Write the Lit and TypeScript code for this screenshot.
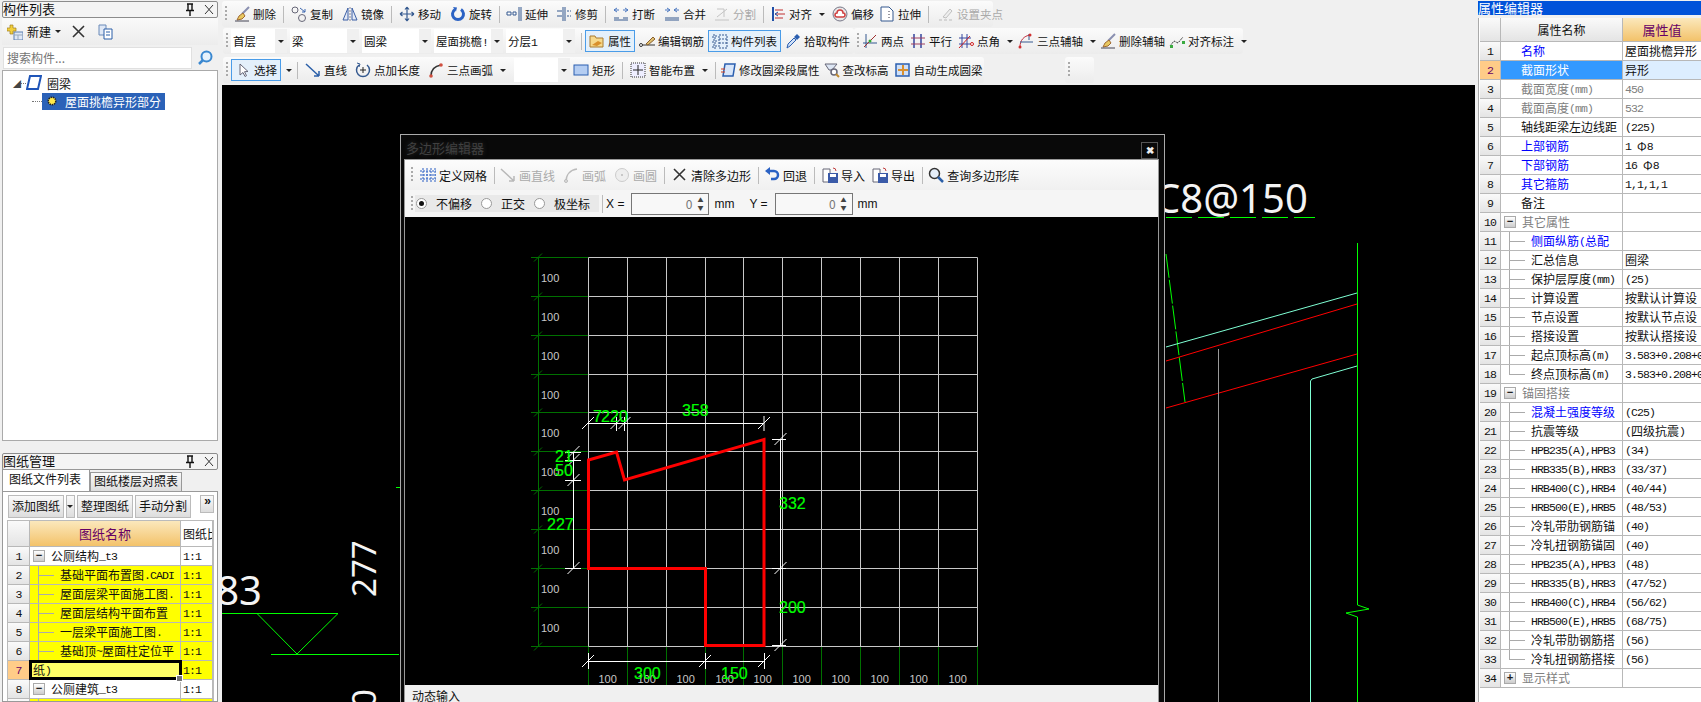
import { css, html, LitElement, svg } from "lit";
import { customElement } from "lit/decorators.js";

type Tool = { i?: string; t?: string; caret?: boolean; on?: boolean; off?: boolean; sep?: boolean; combo?: string; w?: number; ml?: number };

const icons: Record<string, unknown> = {
  erase: svg`<path d="M15 1 8 8" stroke="#8a8fb0" stroke-width="2"/><path d="M9 7 5 10l-2 4 5-1 3-3z" fill="#e8c860" stroke="#a06a30"/><path d="M1 15h14" stroke="#445"/>`,
  copy: svg`<circle cx="4" cy="4" r="3" fill="none" stroke="#667"/><circle cx="11" cy="12" r="3.5" fill="none" stroke="#667"/><path d="M9 2l5 4m0-3v3h-3" fill="none" stroke="#3a66b0"/>`,
  mirror: svg`<path d="M1 14 6 2v12zM15 14 10 2v12z" fill="#e4eaf6" stroke="#3b5fa5"/><path d="M8 1v14" stroke="#889" stroke-dasharray="2 1"/>`,
  move: svg`<path d="M8 1v14M1 8h14M8 1 6 3.500M8 1l2 2.500M8 15l-2-2.500M8 15l2-2.500M1 8l2.500-2M1 8l2.500 2M15 8l-2.500-2M15 8l-2.500 2" fill="none" stroke="#34598f" stroke-width="1.200"/>`,
  rotate: svg`<path d="M5 3.500a5.500 5.500 0 1 0 6 0" fill="none" stroke="#2b62c4" stroke-width="3"/><path d="M3 1l4 .500-1 4z" fill="#2b62c4"/>`,
  extend: svg`<path d="M1 6h4v3H1zM7 6h3v3H7z" fill="#fff" stroke="#34598f"/><path d="M13 1v14M15 1v14" stroke="#34598f"/>`,
  trim: svg`<path d="M7 1v14M9 1v14" stroke="#34598f"/><path d="M1 5h5M1 10h5M11 5h2M11 10h2M14 5h1M14 10h1" stroke="#34598f"/>`,
  break: svg`<path d="M1 12h5M10 12h5M1 14h14" stroke="#34598f"/><path d="M1 4h5M10 4h5M4 2 1 4l3 2M12 2l3 2-3 2" fill="none" stroke="#4a77c0"/>`,
  merge: svg`<path d="M1 12h14M1 14h14" stroke="#34598f"/><path d="M1 4h5M10 4h5M3 2l3 2-3 2M13 2l-3 2 3 2" fill="none" stroke="#4a77c0"/>`,
  split: svg`<path d="M1 14h14M3 11 13 3M3 3h7v8" fill="none" stroke="#c4c4c4"/>`,
  align: svg`<path d="M2 1h2v14H2z" fill="#1f4fa8"/><path d="M5 4h8M5 8h10M5 12h8" stroke="#c03030"/><path d="M5 8l3-2M5 8l3 2" stroke="#1f4fa8"/>`,
  offset: svg`<circle cx="8" cy="8" r="7" fill="#e8e8e8" stroke="#778"/><path d="M5 11a2 2 0 0 1 0-4 3 3 0 0 1 6 0 2 2 0 0 1 0 4z" fill="#fff" stroke="#d04040" stroke-width="1.500"/>`,
  stretch: svg`<path d="M2 1h8l4 4v10H2z" fill="#fff" stroke="#34598f"/><path d="M10 5v9" stroke="#334" stroke-dasharray="1 2"/>`,
  gripset: svg`<path d="M1 14h3M6 14h3M11 14h3" stroke="#bbb"/><path d="M5 11 12 3l2 2-6 7z" fill="#eee" stroke="#c0c0c0"/>`,
  folder: svg`<path d="M1 3h5l1 2h7v9H1z" fill="#f6d98c" stroke="#a87a30"/><path d="M3 12l6-4 4 2-5 3z" fill="#d9902c"/>`,
  rebar: svg`<path d="M1 12h15" stroke="#333"/><circle cx="2" cy="12" r="1.500" fill="#fff" stroke="#333"/><path d="M7 11l7-7 2 2-7 6z" fill="#e0c070" stroke="#886030"/>`,
  list: svg`<path d="M1 2h3v3H1zM1 7h3v3H1zM1 12h3v3H1zM7 2h8v13H7zM7 6h8M7 10h8" fill="none" stroke="#34598f" stroke-dasharray="2 1"/>`,
  pick: svg`<path d="M2 15l1-4 6-6 2 2-6 6z" fill="#cfe0f8" stroke="#2b5fb0"/><path d="M9 4l3-3 3 3-3 3z" fill="#2b5fb0"/>`,
  twopt: svg`<path d="M4 1v14M1 10h14" stroke="#34598f"/><path d="M2 14 14 2" stroke="#a03030"/><circle cx="8" cy="8" r="1.500" fill="#3a3"/>`,
  parallel: svg`<path d="M4 1v14M11 1v14" stroke="#34469f" stroke-width="1.500"/><path d="M1 5h14M1 11h14" stroke="#a04060"/>`,
  angle: svg`<path d="M4 1v14M9 1v14M1 5h12M1 11h12" stroke="#34469f"/><path d="M1 15 12 3" stroke="#d02020"/><circle cx="14" cy="11" r="1.500" fill="#fff" stroke="#d02020"/>`,
  arc3: svg`<path d="M2 14C2 7 6 3 12 2" fill="none" stroke="#c03040"/><path d="M2 9h13M11 1v6" stroke="#34598f"/><circle cx="2" cy="14" r="1.500" fill="#d03030"/><circle cx="12" cy="2" r="1.500" fill="#d03030"/>`,
  dim: svg`<path d="M1 13 5 8l4 2 5-6" fill="none" stroke="#333" stroke-dasharray="2 1"/><path d="M1 12h3v3H1zM13 8h3v3h-3z" fill="#3aaa40"/>`,
  cursor: svg`<path d="M5 2v11l3-2.500 2 4 1.500-.800-2-4 3.500-.200z" fill="#fff" stroke="#667"/>`,
  line: svg`<path d="M1 2 14 14M14 14V9M14 14H9" fill="none" stroke="#2b5fa8" stroke-width="1.500"/>`,
  addlen: svg`<path d="M12 3a6.500 6.500 0 1 1-8 0" fill="none" stroke="#34598f" stroke-width="1.500"/><path d="M2 1l3 1-1 3" fill="none" stroke="#34598f"/><path d="M8 5v6M5 8h6" stroke="#222"/>`,
  arc: svg`<path d="M3 14C3 8 7 4 13 3" fill="none" stroke="#333" stroke-width="1.500"/><circle cx="3" cy="14" r="1.800" fill="#d05040"/><circle cx="13" cy="3" r="1.800" fill="#d05040"/>`,
  rect: svg`<rect x="1" y="3" width="14" height="10" fill="#b4cdf2" stroke="#2b5fb0"/>`,
  smart: svg`<rect x="1" y="1" width="14" height="14" fill="#eef" stroke="#333" stroke-dasharray="1 1"/><path d="M8 3v10M3 8h10" stroke="#222"/>`,
  edit: svg`<path d="M5 2h10l-2 12H3z" fill="#d8e6fa" stroke="#2b5fb0" stroke-width="1.500"/><path d="M1 7h4M1 10h4" stroke="#d04020"/>`,
  check: svg`<path d="M1 2h12l-5 6H5z" fill="#dde6f4" stroke="#667"/><circle cx="10" cy="10" r="3" fill="#fff" stroke="#667" stroke-width="1.500"/><path d="M12 12l3 3" stroke="#c08a30" stroke-width="2"/>`,
  auto: svg`<rect x="1" y="2" width="13" height="12" fill="#cfe0f8" stroke="#2b5fb0" stroke-width="1.500"/><path d="M8 3v10M3 8h10" stroke="#d89030" stroke-width="2"/>`,
  newp: svg`<rect x="7" y="8" width="9" height="8" fill="#dfe8f6" stroke="#5b7fb0"/><path d="M7 11h9M11 11v5" stroke="#9ab"/><path d="M3 1h3v3h3v3H6v3H3V7H0V4h3z" fill="#f2cf3c" stroke="#a08020" stroke-width=".700"/>`,
  x: svg`<path d="M2 2l11 11M13 2 2 13" stroke="#333" stroke-width="1.600"/>`,
  docs: svg`<path d="M1 1h7v10H1z" fill="#dfe8f6" stroke="#6a8ab8"/><path d="M6 5h8v10H6z" fill="#fff" stroke="#2b5fa8"/><path d="M8 8h4M8 11h4" stroke="#2b5fa8"/>`,
  search: svg`<circle cx="9.500" cy="6.500" r="5" fill="#e6f2fc" stroke="#3a88d0" stroke-width="2"/><path d="M6 10l-4 4" stroke="#3a88d0" stroke-width="2.500"/>`,
  grid: svg`<path d="M0 4h16M0 8h16M0 12h16M3 1v15M7 1v15M11 1v15M15 1v15" stroke="#2b5fc4" stroke-dasharray="2 1"/>`,
  lineg: svg`<path d="M1 2 14 14M14 14V9M14 14H9" fill="none" stroke="#b8b8b8" stroke-width="1.500"/>`,
  arcg: svg`<path d="M3 15C3 8 7 3 14 2" fill="none" stroke="#bbb" stroke-width="1.500"/><circle cx="3" cy="14" r="1.500" fill="#ddd" stroke="#bbb"/>`,
  circleg: svg`<circle cx="8" cy="8" r="6.500" fill="#eee" stroke="#ccc"/><circle cx="8" cy="8" r="1" fill="#bbb"/>`,
  undo: svg`<path d="M5 4h5a4 4 0 0 1 0 8H7" fill="none" stroke="#2b62c4" stroke-width="2.500"/><path d="M6 0v8L1 4z" fill="#2b62c4"/>`,
  imp: svg`<path d="M1 2h7v13H1z" fill="#fff" stroke="#667"/><rect x="6" y="6" width="10" height="10" fill="#3a5aa8"/><rect x="8" y="7" width="6" height="3" fill="#fff"/><path d="M11 1a3 3 0 0 1 3 3" fill="none" stroke="#c04040"/>`,
  mag: svg`<circle cx="6.500" cy="6.500" r="5" fill="#e4eefa" stroke="#333" stroke-width="1.500"/><path d="M10 10l5 5" stroke="#2b5fa8" stroke-width="2.500"/>`,
};

const ic = (n: string) => html`<svg class="ic" viewBox="0 0 16 16">${icons[n]}</svg>`;

// latin runs are half-width in the original bitmap font
const mix = (s: string) =>
  s.split(/([\x00-\x7f]+)/).map((p, i) => (i % 2 ? html`<span class="lat">${p}</span>` : p));

const row1: Tool[] = [
  { i: "erase", t: "删除" }, { sep: true }, { i: "copy", t: "复制" }, { i: "mirror", t: "镜像", ml: 1 }, { sep: true },
  { i: "move", t: "移动" }, { i: "rotate", t: "旋转", ml: 1 }, { sep: true }, { i: "extend", t: "延伸", ml: -1 }, { i: "trim", t: "修剪", ml: 0 }, { sep: true },
  { i: "break", t: "打断" }, { i: "merge", t: "合并", ml: 1 }, { i: "split", t: "分割", off: true }, { sep: true },
  { i: "align", t: "对齐", caret: true, ml: -1 }, { i: "offset", t: "偏移", ml: -1 }, { i: "stretch", t: "拉伸", ml: -3 }, { sep: true },
  { i: "gripset", t: "设置夹点", off: true, ml: 2 },
];
const row2a: Tool[] = [
  { combo: "首层", w: 56 }, { combo: "梁", w: 69 }, { combo: "圆梁", w: 69 }, { combo: "屋面挑檐!", w: 69 }, { combo: "分层1", w: 69 }, { sep: true },
  { i: "folder", t: "属性", on: true }, { i: "rebar", t: "编辑钢筋" }, { i: "list", t: "构件列表", on: true }, { i: "pick", t: "拾取构件" },
];
const row2b: Tool[] = [
  { i: "twopt", t: "两点", ml: -4 }, { i: "parallel", t: "平行", ml: -2 }, { i: "angle", t: "点角", caret: true, ml: -2 },
  { i: "arc3", t: "三点辅轴", caret: true, ml: -3 }, { i: "erase", t: "删除辅轴", ml: -4 }, { i: "dim", t: "对齐标注", caret: true, ml: -4 },
];
const row3: Tool[] = [
  { i: "cursor", t: "选择", on: true }, { caret: true }, { sep: true }, { i: "line", t: "直线" }, { i: "addlen", t: "点加长度" },
  { i: "arc", t: "三点画弧", caret: true }, { combo: "", w: 56, ml: 4 }, { i: "rect", t: "矩形", ml: -4 }, { sep: true },
  { i: "smart", t: "智能布置", caret: true }, { sep: true }, { i: "edit", t: "修改圆梁段属性", ml: -3 }, { i: "check", t: "查改标高", ml: -4 }, { i: "auto", t: "自动生成圆梁", ml: -2 },
];
const dlgRow: Tool[] = [
  { i: "grid", t: "定义网格" }, { sep: true }, { i: "lineg", t: "画直线", off: true, ml: -2 }, { i: "arcg", t: "画弧", off: true }, { i: "circleg", t: "画圆", off: true }, { sep: true },
  { i: "x", t: "清除多边形" }, { sep: true }, { i: "undo", t: "回退", ml: -2 }, { sep: true }, { i: "imp", t: "导入" }, { i: "imp", t: "导出", ml: -1 }, { sep: true }, { i: "mag", t: "查询多边形库", ml: -2 },
];

type Prop = { n: string; v?: string; c?: string; vc?: string; kind?: "child" | "last" | "open" | "closed" };
const S = "3.583+0.208+0";
const props: Prop[] = [
  { n: "名称", v: "屋面挑檐异形", c: "blue" }, { n: "截面形状", v: "异形", c: "sel" }, { n: "截面宽度(mm)", v: "450", c: "gray", vc: "gray" }, { n: "截面高度(mm)", v: "532", c: "gray", vc: "gray" },
  { n: "轴线距梁左边线距", v: "(225)" }, { n: "上部钢筋", v: "1 Φ8", c: "blue" }, { n: "下部钢筋", v: "16 Φ8", c: "blue" }, { n: "其它箍筋", v: "1,1,1,1", c: "blue" }, { n: "备注" },
  { n: "其它属性", c: "gray", kind: "open" }, { n: "侧面纵筋(总配", c: "blue", kind: "child" }, { n: "汇总信息", v: "圈梁", kind: "child" }, { n: "保护层厚度(mm)", v: "(25)", kind: "child" },
  { n: "计算设置", v: "按默认计算设", kind: "child" }, { n: "节点设置", v: "按默认节点设", kind: "child" }, { n: "搭接设置", v: "按默认搭接设", kind: "child" }, { n: "起点顶标高(m)", v: S, kind: "child" }, { n: "终点顶标高(m)", v: S, kind: "last" },
  { n: "锚固搭接", c: "gray", kind: "open" }, { n: "混凝土强度等级", v: "(C25)", c: "blue", kind: "child" }, { n: "抗震等级", v: "(四级抗震)", kind: "child" },
  { n: "HPB235(A),HPB3", v: "(34)", kind: "child" }, { n: "HRB335(B),HRB3", v: "(33/37)", kind: "child" }, { n: "HRB400(C),HRB4", v: "(40/44)", kind: "child" }, { n: "HRB500(E),HRB5", v: "(48/53)", kind: "child" },
  { n: "冷轧带肋钢筋锚", v: "(40)", kind: "child" }, { n: "冷轧扭钢筋锚固", v: "(40)", kind: "child" }, { n: "HPB235(A),HPB3", v: "(48)", kind: "child" }, { n: "HRB335(B),HRB3", v: "(47/52)", kind: "child" },
  { n: "HRB400(C),HRB4", v: "(56/62)", kind: "child" }, { n: "HRB500(E),HRB5", v: "(68/75)", kind: "child" }, { n: "冷轧带肋钢筋搭", v: "(56)", kind: "child" }, { n: "冷轧扭钢筋搭接", v: "(56)", kind: "last" },
  { n: "显示样式", c: "gray", kind: "closed" },
];

const drawings = [
  { n: "公厕结构_t3", kind: "open" }, { n: "基础平面布置图.CADI", y: 1 }, { n: "屋面层梁平面施工图.", y: 1 }, { n: "屋面层结构平面布置", y: 1 }, { n: "一层梁平面施工图.", y: 1 },
  { n: "基础顶~屋面柱定位平", y: 1 }, { n: "纸)", edit: 1 }, { n: "公厕建筑_t3", kind: "open" }, { n: "", y: 1 },
];

const gx = (k: number) => Math.round(588 + k * 38.85) + 0.5;
const gy = (k: number) => Math.round(257 + k * 38.85) + 0.5;
const range = (n: number) => Array.from({ length: n }, (_, i) => i);
const tick = (x: number, y: number) => svg`<line x1=${x - 6} y1=${y + 6} x2=${x + 6} y2=${y - 6} />`;
const pin = html`<svg class="pin" viewBox="0 0 12 13"><path d="M3 1h6M4 1v6M8 1v6M2 7.500h8M6 8v5" fill="none" stroke="#111" stroke-width="1.400"/></svg>`;
const closeX = html`<svg class="pin" viewBox="0 0 12 13"><path d="M2 2l8 9M10 2l-8 9" fill="none" stroke="#333"/></svg>`;

@customElement("app-root")
export class AppRoot extends LitElement {
  static styles = css`
    :host {
      display: grid;
      grid-template-columns: 222px 1fr 226px;
      width: 1701px;
      height: 702px;
      overflow: hidden;
      background: #f0f0f0;
      font: 12px "Noto Sans CJK SC", "Liberation Sans", sans-serif;
      color: #111;
    }
    .lat { font: 11.500px "Liberation Mono", monospace; letter-spacing: -0.9px; white-space: pre; }
    .ic { width: 16px; height: 16px; flex: none; }
    .pin { width: 12px; height: 13px; margin-left: 7px; flex: none; }

    /* left column */
    .left { display: flex; flex-direction: column; height: 702px; overflow: hidden; padding: 1px 4px 0 2px; box-sizing: border-box; }
    .title { display: flex; align-items: center; height: 15px; flex: none; border: 1px solid #8c8c8c; border-radius: 2px; font-size: 13px; line-height: 13px; background: #f4f4f4; padding-right: 2px; }
    .title span { flex: 1; white-space: nowrap; padding-bottom: 3px; }
    .newbar { display: flex; align-items: center; height: 27px; flex: none; padding-left: 5px; gap: 4px; background: linear-gradient(#fafafa, #ececec); }
    .searchrow { display: flex; align-items: center; height: 25px; flex: none; gap: 5px; }
    .searchrow input { width: 189px; height: 22px; box-sizing: border-box; border: 1px solid #e0e0e0; background: #fff; padding: 0 3px; font: inherit; color: #777; margin-left: 1px; }
    .tree { height: 371px; flex: none; background: #fff; border: 1px solid #aaa; box-sizing: border-box; padding: 3px 0 0 10px; }
    .treerow { display: flex; align-items: center; height: 18px; }
    .dots { width: 10px; border-bottom: 1px dotted #777; height: 0; flex: none; }
    .sel { background: #2b62b8; color: #fff; height: 17px; line-height: 17px; white-space: nowrap; display: flex; align-items: center; gap: 7px; width: 123px; padding-left: 4px; box-sizing: border-box; }
    .gap { height: 12px; flex: none; }
    .tabs { display: flex; align-items: flex-end; height: 21px; flex: none; }
    .tabs div { padding: 0 3px; border: 1px solid #999; border-bottom: none; height: 18px; line-height: 15px; background: linear-gradient(#fafafa, #ddd); white-space: nowrap; }
    .tabs .active { height: 21px; line-height: 18px; background: #fff; width: 74px; padding: 0 6px; }
    .tabbody { flex: 1; border: 1px solid #999; background: #fff; padding: 3px 3px 0 4px; min-height: 0; overflow: hidden; }
    .btns { display: flex; gap: 2px; height: 23px; margin-left: 1px; }
    .btns div { border: 1px solid #bbb; background: linear-gradient(#fafafa, #ddd); padding: 0 3px; line-height: 19px; white-space: nowrap; }
    .btns .more { margin-left: 7px; height: 16px; width: 6px; line-height: 12px; font-size: 12px; font-family: "Liberation Mono", monospace; font-weight: bold; }
    .btns .drop { width: 10px; padding: 0; display: flex; align-items: center; justify-content: center; }
    .btns .drop .caret { margin: 0; }

    /* tables */
    .tbl { border: 1px solid #bbb; margin-top: 2px; }
    .row { display: grid; height: 19px; box-sizing: border-box; border-bottom: 1px solid #b8b8b8; line-height: 18px; }
    .row > div { border-right: 1px solid #b8b8b8; min-width: 0; overflow: hidden; white-space: nowrap; display: flex; align-items: center; }
    .d { grid-template-columns: 22px 151px 1fr; }
    .p { grid-template-columns: 21px 122px 1fr; }
    .num { justify-content: center; background: linear-gradient(#fafafa, #e4e4e4); font: 11.500px "Liberation Mono", monospace; letter-spacing: -0.8px; }
    .head { background: linear-gradient(#fafafa, #e4e4e4); justify-content: center; }
    .hot { background: linear-gradient(#fbe8bc, #f3c26a) !important; color: #660066; justify-content: center; font-size: 13px; }
    .hd { height: 26px; }
    .hp { height: 24px; }
    .box { width: 10px; height: 10px; border: 1px solid #aaa; background: linear-gradient(#fff, #ccc); display: flex; align-items: center; justify-content: center; font: bold 11px/10px "Liberation Mono", monospace; color: #222; margin: 0 6px 0 3px; flex: none; }
    .branch { width: 22px; height: 100%; flex: none; margin-left: 8px; background: linear-gradient(#aaa, #aaa) 0 0 / 1px 100% no-repeat, linear-gradient(#aaa, #aaa) 0 50% / 16px 1px no-repeat; }
    .branch.last { background: linear-gradient(#aaa, #aaa) 0 0 / 1px 50% no-repeat, linear-gradient(#aaa, #aaa) 0 50% / 16px 1px no-repeat; }
    .yellow > div:not(.num) { background: #ffff00; }
    .edit { background: #ffff66 !important; outline: 3px solid #000; outline-offset: -2px; padding-left: 3px; overflow: visible !important; position: relative; }
    .edit::after { content: ""; position: absolute; right: -3px; bottom: -3px; width: 5px; height: 5px; background: #777; border: 1px solid #fff; }
    .numhot { background: #ffcc88 !important; color: #660066; }
    .ratio { padding-left: 2px; }
    .plain { padding-left: 20px; }
    .blue { color: #0000ff; }
    .gray { color: #808080; }
    .nsel { background: #3399ff !important; color: #fff; }
    .vsel { background: #ddeeff !important; }
    .val { padding-left: 2px; }

    /* center */
    .center { display: flex; flex-direction: column; min-width: 0; }
    .bars { height: 85px; flex: none; display: flex; flex-direction: column; gap: 1px; padding-top: 1px; box-sizing: border-box; }
    .line { display: flex; height: 26px; }
    .line.in { padding-left: 1px; }
    .line.low { margin-top: 2px; }
    .bar { display: flex; align-items: center; height: 26px; padding: 0 0 0 3px; box-sizing: border-box; flex: none; background: linear-gradient(#fbfbfb, #ececec); border-radius: 3px; font-size: 11.500px; }
    .grip { width: 2px; height: 16px; margin: 0 3px 0 0; background: repeating-linear-gradient(#aaa 0 2px, transparent 2px 4px); flex: none; }
    .tool { display: flex; align-items: center; gap: 3px; padding: 0 3px; height: 22px; box-sizing: border-box; white-space: nowrap; border: 1px solid transparent; flex: none; }
    .tool.on { border-color: #4a9ce8; background: #e4f0fb; }
    .tool.off { color: #aaa; }
    .caret { width: 0; height: 0; border: 3px solid transparent; border-top: 3.500px solid #222; border-bottom: none; margin-left: 4px; flex: none; }
    .alone { margin: 0 2px 0 5px; }
    .vsep { width: 1px; height: 17px; background: #bbb; margin: 0 3px; flex: none; }
    .combo { display: flex; height: 24px; margin-right: 3px; background: #fff; box-sizing: border-box; align-items: center; padding-left: 2px; flex: none; }
    .combo span { flex: 1; white-space: nowrap; overflow: hidden; }
    .combo i { width: 12px; height: 100%; background: #f0f0f0; display: flex; align-items: center; justify-content: center; flex: none; }
    .combo .caret { margin: 0; }

    .canvas { flex: 1; background: #000; position: relative; overflow: hidden; }
    .canvas > svg { position: absolute; inset: 0; width: 100%; height: 100%; }
    .dialog { position: absolute; left: 178px; top: 49px; width: 765px; height: 570px; box-sizing: border-box; border: 1px solid #aaa; background: #090909; padding: 0 5px 0 3px; }
    .dtitle { height: 24px; display: flex; align-items: center; justify-content: space-between; padding-left: 2px; color: #404040; font-size: 13px; text-shadow: 0 0 5px rgba(70, 70, 70, 0.6); }
    .close { width: 15px; height: 15px; border: 1px solid #555; color: #eee; font: bold 10px/15px "Liberation Sans", sans-serif; text-align: center; margin-right: 1px; margin-top: 6px; text-shadow: none; }
    .dbody { border: 1px solid #999; border-bottom: none; display: flex; flex-direction: column; height: 545px; }
    .dbar { display: flex; align-items: center; flex: none; background: #f5f5f5; padding-left: 6px; font-size: 12px; }
    .dbar.t { height: 30px; background: linear-gradient(#fcfcfc, #f0f0f0); }
    .dbar.b { height: 27px; }
    .radios { display: flex; align-items: center; background: #e9e9e9; height: 17px; padding-right: 9px; margin-right: 0; }
    .radio { display: flex; align-items: center; gap: 9px; margin-right: 8px; margin-left: 1px; }
    .radio i { width: 9px; height: 9px; border: 1px solid #999; border-radius: 50%; background: #fff; box-sizing: content-box; display: flex; align-items: center; justify-content: center; }
    .radio i.on::after { content: ""; width: 5px; height: 5px; border-radius: 50%; background: #111; }
    .spin { width: 78px; height: 22px; box-sizing: border-box; border: 1px solid #777; background: #f8f8f8; display: flex; align-items: center; justify-content: flex-end; color: #777; font-size: 12px; margin: 0 5px 0 7px; }
    .spin em { font-style: normal; display: flex; flex-direction: column; width: 16px; font-size: 6px; line-height: 8px; text-align: center; color: #444; }
    .unit { font-family: "Liberation Sans", sans-serif; font-size: 12px; white-space: nowrap; }
    .draw { flex: none; width: 753px; height: 468px; background: #000; display: block; }
    .dfoot { flex: 1; background: #f0f0f0; padding: 3px 0 0 7px; font-size: 12px; line-height: 16px; overflow: hidden; }

    /* right */
    .right { padding: 1px 0 0 3px; background: #f0f0f0; display: flex; flex-direction: column; height: 702px; box-sizing: border-box; overflow: hidden; }
    .ptitle { height: 14px; line-height: 13px; background: #0052d9; color: #fff; font-size: 13px; flex: none; }
    .pgrid { flex: 1; margin-top: 3px; background: #fff; border-left: 1px solid #aaa; padding-left: 1px; }
    .pgrid .row > div:last-child { border-right: none; }
  `;

  private tool(t: Tool) {
    if (t.sep) return html`<div class="vsep"></div>`;
    const ml = t.ml ? `margin-left:${t.ml}px;` : "";
    if (t.combo !== undefined)
      return html`<div class="combo" style="width:${t.w}px;${ml}"><span>${mix(t.combo)}</span><i><u class="caret"></u></i></div>`;
    if (!t.i) return html`<div class="caret alone"></div>`;
    return html`<div class="tool ${t.on ? "on" : ""} ${t.off ? "off" : ""}" style=${ml}>
      ${ic(t.i)}<span>${t.t}</span>${t.caret ? html`<u class="caret"></u>` : ""}
    </div>`;
  }

  private bar(tools: Tool[], width: number) {
    return html`<div class="bar" style="width:${width}px"><div class="grip"></div>${tools.map((t) => this.tool(t))}</div>`;
  }

  private leftColumn() {
    return html`<div class="left">
      <div class="title"><span>构件列表</span>${pin}${closeX}</div>
      <div class="newbar">${ic("newp")}<span>新建</span><u class="caret" style="margin:0 6px 0 0"></u>${ic("x")}<span style="width:3px"></span>${ic("docs")}</div>
      <div class="searchrow"><input placeholder="搜索构件..." />${ic("search")}</div>
      <div class="tree">
        <div class="treerow">
          <span style="color:#444;font-size:8px;width:8px">◢</span><span class="dots" style="width:5px"></span>
          <svg class="ic" viewBox="0 0 16 16"><path d="M4 1h11l-3 13H1z" fill="#fff" stroke="#1f55b8" stroke-width="2"/></svg>
          <span style="margin-left:5px">圈梁</span>
        </div>
        <div class="treerow" style="padding-left:19px">
          <span class="dots"></span>
          <div class="sel">
            <svg class="ic" viewBox="0 0 16 16" style="width:12px"><circle cx="8" cy="8" r="5" fill="#ffe94a" stroke="#222" stroke-width="2" stroke-dasharray="2 1"/></svg>
            <span>屋面挑檐异形部分</span>
          </div>
        </div>
      </div>
      <div class="gap"></div>
      <div class="title"><span>图纸管理</span>${pin}${closeX}</div>
      <div class="tabs"><div class="active">图纸文件列表</div><div>图纸楼层对照表</div></div>
      <div class="tabbody">
        <div class="btns"><div>添加图纸</div><div class="drop"><u class="caret"></u></div><div>整理图纸</div><div>手动分割</div><div class="more">»</div></div>
        <div class="tbl">
          <div class="row d hd"><div class="head"></div><div class="hot">图纸名称</div><div style="padding-left:2px">图纸比</div></div>
          ${drawings.map((d, i) => html`<div class="row d ${d.y || d.edit ? "yellow" : ""}">
            <div class="num ${d.edit ? "numhot" : ""}">${i + 1}</div>
            <div class=${d.edit ? "edit" : ""}>
              ${d.kind ? html`<span class="box">−</span>` : d.edit ? "" : html`<span class="branch"></span>`}${mix(d.n)}
            </div>
            <div class="ratio">${mix("1:1")}</div>
          </div>`)}
        </div>
      </div>
    </div>`;
  }

  private propColumn() {
    return html`<div class="right">
      <div class="ptitle">属性编辑器</div>
      <div class="pgrid">
        <div class="row p hp"><div class="head"></div><div class="head">属性名称</div><div class="hot">属性值</div></div>
        ${props.map((p, i) => {
          const sel = p.c === "sel";
          const open = p.kind === "open" || p.kind === "closed";
          return html`<div class="row p">
            <div class="num ${sel ? "numhot" : ""}">${i + 1}</div>
            <div class="${sel ? "nsel" : p.c ?? ""} ${p.kind ? "" : "plain"}">
              ${open ? html`<span class="box">${p.kind === "open" ? "−" : "+"}</span>` : ""}
              ${p.kind === "child" || p.kind === "last" ? html`<span class="branch ${p.kind === "last" ? "last" : ""}"></span>` : ""}
              ${mix(p.n)}
            </div>
            <div class="val ${sel ? "vsel" : ""} ${p.vc ?? ""}">${p.v ? mix(p.v) : ""}</div>
          </div>`;
        })}
      </div>
    </div>`;
  }

  private backdrop() {
    return svg`<svg viewBox="222 85 1253 617" fill="none">
      <g fill="#f4f4f4" font-family="Noto Sans, sans-serif">
        <text x="262" y="605" font-size="40" text-anchor="end">83</text>
        <text transform="translate(376 597) rotate(-90)" font-size="33">277</text>
        <text transform="translate(376 708) rotate(-90)" font-size="33">0</text>
        <text x="1155" y="213" font-size="40">C8@150</text>
      </g>
      <g stroke="#00ff00">
        <path d="M222 613.500H338L297 654 257 613.500M271 654.500H399M396 487.500h4"/>
        <path d="M1166 217.500H1315" stroke-dasharray="26 6"/>
        <path d="M1166 254 1185 402" stroke-dasharray="24 2"/>
        <path d="M1357.500 243V605L1369 609 1346 613 1357.500 617V702"/>
      </g>
      <path d="M1166 347 1357 293M1357 366 1312 379 1310.500 381V702" stroke="#7fffd4"/>
      <path d="M1166 361 1357 304M1166 408 1357 354" stroke="#ff0000"/>
      <path d="M1218.500 349V702" stroke="#999"/>
    </svg>`;
  }

  private drawing() {
    const lab = (x: number, y: number, t: string) => svg`<text x=${x} y=${y}>${t}</text>`;
    return html`<svg class="draw" viewBox="405 217 753 468" fill="none">
      <g stroke="#007000">
        <path d="M538.500 ${gy(0)}V${gy(10)}"/>
        ${range(11).map((k) => svg`<path d="M531 ${gy(k)}H588M${gx(k)} 646V685M534 ${gy(k) + 4}l8-8"/>`)}
      </g>
      <g stroke="#c8c8c8">
        ${range(11).map((k) => svg`<path d="M${gx(k)} ${gy(0)}V${gy(10)}M${gx(0)} ${gy(k)}H${gx(10)}"/>`)}
      </g>
      <g fill="#c8c8c8" font-family="Liberation Sans, sans-serif" font-size="11">
        ${range(10).map((k) => lab(541, gy(k) + 24, "100"))}
        ${range(10).map((k) => lab(gx(k) + 10, 683, "100"))}
      </g>
      <path d="M588.500 460 616.500 452 624.500 480 764 439.500V645.500H705.500V568.500H588.500Z" stroke="#ff0000" stroke-width="3"/>
      <g stroke="#fff">
        <path d="M588 423.500H764M573.500 452V568M780.500 439V645M588 661.500H764"/>
        <path d="M616.500 417V431M624.500 417V431M764 416V431M565 452.500H581M565 460.500H581M565 480.500H581M565 568.500H581M772 439.500H786M772 568.500H786M772 645.500H786M588.500 653V669M705.500 653V669M764.500 653V669"/>
        ${[588, 616.5, 624.5, 764].map((x) => tick(x, 423))}
        ${[452, 460, 480, 568].map((y) => tick(573.5, y))}
        ${[439, 568, 645].map((y) => tick(780.5, y))}
        ${[588, 705, 764].map((x) => tick(x, 661))}
      </g>
      <g fill="#00ff00" stroke="#00ff00" stroke-width=".2" font-family="Liberation Sans, sans-serif" font-size="16">
        ${lab(593, 422, "7")}${lab(601, 422, "2")}${lab(610, 422, "20")}${lab(682, 416, "358")}${lab(555, 462, "21")}${lab(555, 476, "50")}
        ${lab(547, 530, "227")}${lab(779, 509, "332")}${lab(779, 613, "200")}${lab(634, 679, "300")}${lab(721, 679, "150")}
      </g>
    </svg>`;
  }

  private dialog() {
    const spin = html`<div class="spin">0<em><span>▲</span><span>▼</span></em></div>`;
    return html`<div class="dialog">
      <div class="dtitle"><span>多边形编辑器</span><div class="close">✖</div></div>
      <div class="dbody">
        <div class="dbar t"><div class="grip"></div>${dlgRow.map((t) => this.tool(t))}</div>
        <div class="dbar b">
          <div class="grip" style="margin-right:2px"></div>
          <div class="radios">
            <div class="radio"><i class="on"></i><span>不偏移</span></div>
            <div class="radio"><i></i><span>正交</span></div>
            <div class="radio" style="margin-right:0"><i></i><span>极坐标</span></div>
          </div>
          <div class="vsep" style="height:18px"></div>
          <span class="unit">X =</span>${spin}<span class="unit">mm</span>
          <span class="unit" style="margin-left:15px">Y =</span>${spin}<span class="unit">mm</span>
        </div>
        ${this.drawing()}
        <div class="dfoot">动态输入</div>
      </div>
    </div>`;
  }

  render() {
    return html`
      ${this.leftColumn()}
      <div class="center">
        <div class="bars">
          <div class="line">${this.bar(row1, 771)}</div>
          <div class="line in">${this.bar(row2a, 631)}${this.bar(row2b, 389)}</div>
          <div class="line in low">${this.bar(row3, 761)}<span style="width:81px"></span><div class="bar" style="width:29px"><div class="grip"></div></div></div>
        </div>
        <div class="canvas">${this.backdrop()}${this.dialog()}</div>
      </div>
      ${this.propColumn()}
    `;
  }
}

declare global {
  interface HTMLElementTagNameMap {
    "app-root": AppRoot;
  }
}
